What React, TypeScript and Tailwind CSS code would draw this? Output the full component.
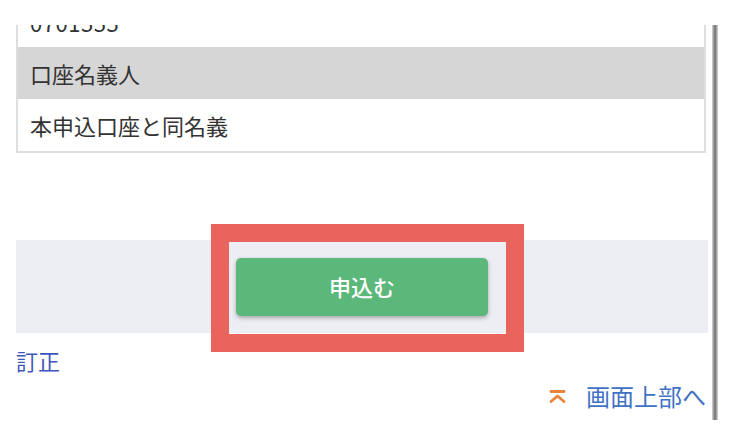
import React from "react";

const jp = { fontFamily: '"Noto Sans CJK JP", "Noto Sans", sans-serif' };

const ToTopIcon = () => (
  <svg width="19" height="15" viewBox="0 0 19 15" fill="none" stroke="#e8833a" strokeWidth="2.8" strokeLinecap="round" strokeLinejoin="round">
    <path d="M3 2.5h13" />
    <path d="M3 12.5l6.5-5.5 6.5 5.5" />
  </svg>
);

export default function App() {
  return (
    <div className="w-[739px] h-[433px] bg-white overflow-hidden flex" style={jp}>
      <div className="w-[710px] flex flex-col">
        <div className="h-[25px]" />
        <div className="ml-[16px] w-[690px] border-2 border-[#dedede] border-t-0 text-[22px] text-[#333]">
          <div className="h-[22px] overflow-hidden flex items-start pl-[12px]">
            <span className="leading-none mt-[-14px] tracking-wide">0701555</span>
          </div>
          <div className="h-[52px] bg-[#d6d6d6] flex items-center pl-[12px]">口座名義人</div>
          <div className="h-[52px] flex items-center pl-[12px]">本申込口座と同名義</div>
        </div>
        <div className="h-[87px]" />
        <div className="relative ml-[16px] w-[692px] h-[93px] bg-[#eceef3] flex items-center justify-center">
          <div className="absolute left-[195px] top-[-16px] w-[313px] h-[128px] border-[18px] border-[#e8645c]" />
          <button className="relative w-[252px] h-[58px] rounded-[5px] bg-[#5cb87a] text-white text-[22px] font-medium shadow-[0_2px_4px_rgba(0,0,0,0.3)]">
            申込む
          </button>
        </div>
        <div className="ml-[16px] mt-[12px] text-[22px] leading-[30px] text-[#3d56c0]">訂正</div>
        <div className="mt-[5px] flex items-center justify-end gap-[19px] pr-[4px] text-[24px] leading-[32px] text-[#3f72c4]">
          <ToTopIcon />
          <span>画面上部へ</span>
        </div>
      </div>
      <div className="mt-[25px] ml-[2px] w-[6px] h-[395px] bg-gradient-to-r from-[#d8d8d8] via-[#6e6e6e] to-[#d8d8d8]" />
    </div>
  );
}
